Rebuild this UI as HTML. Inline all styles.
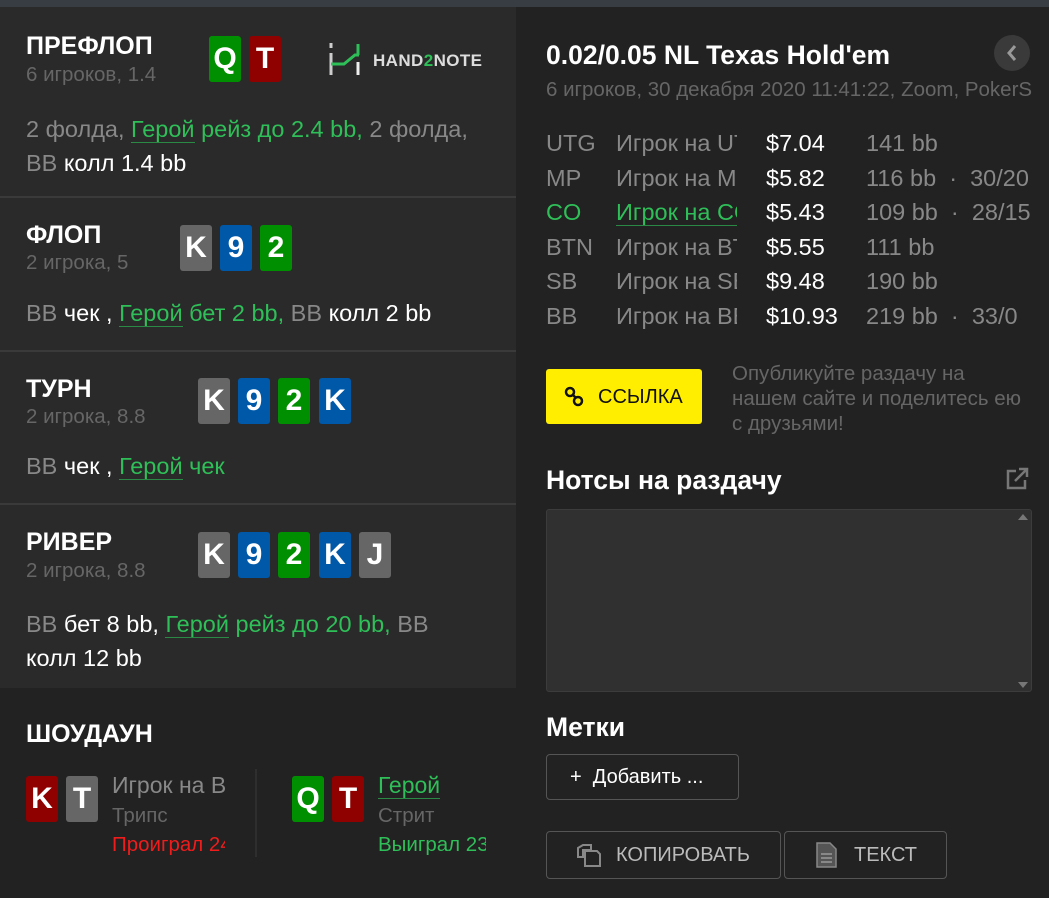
<!DOCTYPE html>
<html><head><meta charset="utf-8"><style>
*{margin:0;padding:0;box-sizing:border-box}
body{width:1049px;height:898px;background:#222;font-family:"Liberation Sans",sans-serif;position:relative;overflow:hidden;color:#fff}
.a{position:absolute;white-space:nowrap}
.top{left:0;top:0;width:1049px;height:7px;background:#373d42}
.lp{left:0;top:7px;width:516px;height:681px;background:#2a2a2a}
.sep{left:0;width:516px;height:2px;background:#3a3a3a}
.h{font-size:25px;font-weight:bold;color:#fff}
.sub{font-size:20.5px;color:#666}
.t{font-size:23.5px;color:#888}
.w{color:#fff}.g{color:#2fbf58}.u{border-bottom:1px solid #2a8a45}
.c{width:32px;height:46px;border-radius:3px;font-size:30px;font-weight:bold;color:#fff;text-align:center;line-height:46px;position:absolute}
.G{background:#008f00}.R{background:#8f0000}.B{background:#0058a8}.X{background:#666}
.btn{border:1px solid #555;border-radius:4px;position:absolute}
</style></head><body>
<div class="a top"></div>
<div class="a lp"></div>
<div class="a sep" style="top:196px"></div>
<div class="a sep" style="top:350px"></div>
<div class="a sep" style="top:503px"></div>

<div class="a h" style="left:26px;top:32px">ПРЕФЛОП</div>
<div class="a sub" style="left:26px;top:63px">6 игроков, 1.4</div>
<div class="c G" style="left:209px;top:36px">Q</div><div class="c R" style="left:249px;top:36px">T</div>
<svg class="a" style="left:329px;top:42px" width="32" height="34"><path d="M2 1v5M2 11v22" stroke="#ccc" stroke-width="3"/><path d="M2 22h13l11-9h4" stroke="#2fbf58" stroke-width="3" fill="none"/><path d="M29 2v11" stroke="#2fbf58" stroke-width="3"/><path d="M29 20v13" stroke="#eee" stroke-width="3"/></svg>
<div class="a" style="left:373px;top:51px;font-size:17px;font-weight:bold;color:#ddd;letter-spacing:0.4px">HAND<span class="g">2</span>NOTE</div>
<div class="a t" style="left:26px;top:112px;line-height:34px">2 фолда, <span class="g u">Герой</span><span class="g"> рейз до 2.4 bb,</span> 2 фолда,<br>BB <span class="w">колл 1.4 bb</span></div>

<div class="a h" style="left:26px;top:221px">ФЛОП</div>
<div class="a sub" style="left:26px;top:251px">2 игрока, 5</div>
<div class="c X" style="left:180px;top:225px">K</div><div class="c B" style="left:220px;top:225px">9</div><div class="c G" style="left:260px;top:225px">2</div>
<div class="a t" style="left:26px;top:300px">BB <span class="w">чек ,</span> <span class="g u">Герой</span><span class="g"> бет 2 bb,</span> BB <span class="w">колл 2 bb</span></div>

<div class="a h" style="left:26px;top:375px">ТУРН</div>
<div class="a sub" style="left:26px;top:405px">2 игрока, 8.8</div>
<div class="c X" style="left:198px;top:378px">K</div><div class="c B" style="left:238px;top:378px">9</div><div class="c G" style="left:278px;top:378px">2</div><div class="c B" style="left:319px;top:378px">K</div>
<div class="a t" style="left:26px;top:453px">BB <span class="w">чек ,</span> <span class="g u">Герой</span><span class="g"> чек</span></div>

<div class="a h" style="left:26px;top:528px">РИВЕР</div>
<div class="a sub" style="left:26px;top:559px">2 игрока, 8.8</div>
<div class="c X" style="left:198px;top:532px">K</div><div class="c B" style="left:238px;top:532px">9</div><div class="c G" style="left:278px;top:532px">2</div><div class="c B" style="left:319px;top:532px">K</div><div class="c X" style="left:359px;top:532px">J</div>
<div class="a t" style="left:26px;top:607px;line-height:34px">BB <span class="w">бет 8 bb,</span> <span class="g u">Герой</span><span class="g"> рейз до 20 bb,</span> BB<br><span class="w">колл 12 bb</span></div>

<div class="a h" style="left:26px;top:720px">ШОУДАУН</div>
<div class="c R" style="left:26px;top:776px">K</div><div class="c X" style="left:66px;top:776px">T</div>
<div class="a" style="left:112px;top:772px;width:113px;overflow:hidden;font-size:23px;color:#888">Игрок на BB</div>
<div class="a" style="left:112px;top:804px;font-size:20.5px;color:#666">Трипс</div>
<div class="a" style="left:112px;top:833px;width:113px;overflow:hidden;font-size:20.5px;color:#f01c1c">Проиграл 24</div>
<div class="a" style="left:255px;top:769px;width:2px;height:88px;background:#2e2e2e"></div>
<div class="c G" style="left:292px;top:776px">Q</div><div class="c R" style="left:332px;top:776px">T</div>
<div class="a g" style="left:378px;top:772px;font-size:23px"><span class="u">Герой</span></div>
<div class="a" style="left:378px;top:804px;font-size:20.5px;color:#666">Стрит</div>
<div class="a g" style="left:378px;top:833px;width:108px;overflow:hidden;font-size:20.5px">Выиграл 23</div>

<div class="a" style="left:546px;top:40px;font-size:26.5px;font-weight:bold">0.02/0.05 NL Texas Hold'em</div>
<div class="a" style="left:994px;top:35px;width:36px;height:36px;border-radius:50%;background:#3a3a3a"></div>
<svg class="a" style="left:1004px;top:43px" width="16" height="20"><path d="M11 3l-6 7 6 7" stroke="#999" stroke-width="3" fill="none"/></svg>
<div class="a" style="left:546px;top:78px;width:486px;overflow:hidden;font-size:20.5px;color:#666">6 игроков, 30 декабря 2020 11:41:22, Zoom, PokerStars</div>

<div class="a" style="left:546px;top:126px;font-size:23.5px;line-height:34.6px;color:#888">UTG<br>MP<br><span class="g">CO</span><br>BTN<br>SB<br>BB</div>
<div class="a" style="left:616px;top:126px;width:121px;overflow:hidden;font-size:23.5px;line-height:34.6px;color:#888">Игрок на UTG<br>Игрок на MP<br><span class="g u">Игрок на CO</span><br>Игрок на BTN<br>Игрок на SB<br>Игрок на BB</div>
<div class="a" style="left:766px;top:126px;font-size:23.5px;line-height:34.6px;color:#fff">$7.04<br>$5.82<br>$5.43<br>$5.55<br>$9.48<br>$10.93</div>
<div class="a" style="left:866px;top:126px;font-size:23.5px;line-height:34.6px;color:#888">141 bb<br>116 bb &nbsp;· &nbsp;30/20<br>109 bb &nbsp;· &nbsp;28/15<br>111 bb<br>190 bb<br>219 bb &nbsp;· &nbsp;33/0</div>

<div class="a" style="left:546px;top:369px;width:156px;height:55px;background:#ffee00;border-radius:3px"></div>
<svg class="a" style="left:563px;top:386px" width="24" height="22"><circle cx="7" cy="6" r="4" stroke="#111" stroke-width="2.5" fill="none"/><circle cx="15" cy="15" r="4" stroke="#111" stroke-width="2.5" fill="none"/><path d="M9 8l4 4" stroke="#111" stroke-width="2.5"/></svg>
<div class="a" style="left:598px;top:386px;font-size:20px;color:#111">ССЫЛКА</div>
<div class="a" style="left:732px;top:361px;font-size:20.5px;line-height:25px;color:#666">Опубликуйте раздачу на<br>нашем сайте и поделитесь ею<br>с друзьями!</div>

<div class="a" style="left:546px;top:465px;font-size:26.5px;font-weight:bold">Нотсы на раздачу</div>
<svg class="a" style="left:1004px;top:466px" width="26" height="26"><path d="M12 5H4v17h17v-8" stroke="#777" stroke-width="2.5" fill="none"/><path d="M11 15L22 4M15 3h8v8" stroke="#777" stroke-width="2.5" fill="none"/></svg>
<div class="a" style="left:546px;top:509px;width:486px;height:183px;background:#303030;border:1px solid #3c3c3c;border-radius:3px"></div>
<div class="a" style="left:1018px;top:514px;border:5px solid transparent;border-bottom:6px solid #777;border-top:0"></div>
<div class="a" style="left:1018px;top:682px;border:5px solid transparent;border-top:6px solid #777;border-bottom:0"></div>

<div class="a" style="left:546px;top:712px;font-size:26.5px;font-weight:bold">Метки</div>
<div class="btn" style="left:546px;top:754px;width:193px;height:46px"></div>
<div class="a" style="left:570px;top:766px;font-size:20px">+&nbsp; Добавить ...</div>

<div class="btn" style="left:546px;top:831px;width:235px;height:48px"></div>
<div class="btn" style="left:784px;top:831px;width:163px;height:48px"></div>
<svg class="a" style="left:576px;top:842px" width="28" height="26"><path d="M7 3h8v5h-8v7h-5v-9z" stroke="#888" stroke-width="2" fill="none"/><path d="M9 9h12l3 3v12h-15z" stroke="#888" stroke-width="2" fill="none"/></svg>
<div class="a" style="left:616px;top:844px;font-size:20px;color:#bbb">КОПИРОВАТЬ</div>
<svg class="a" style="left:815px;top:841px" width="24" height="28"><path d="M2 2h13l6 6v18h-19z" fill="#555" stroke="#888" stroke-width="1.5"/><path d="M6 13h11M6 17h11M6 21h11" stroke="#999" stroke-width="1.5"/></svg>
<div class="a" style="left:854px;top:844px;font-size:20px;color:#bbb">ТЕКСТ</div>
</body></html>
